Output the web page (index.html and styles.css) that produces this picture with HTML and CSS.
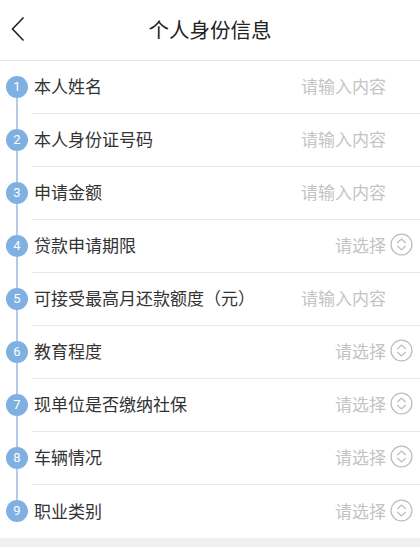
FILE: index.html
```html
<!DOCTYPE html>
<html>

<head>
  <meta charset="utf-8">
  <link rel="stylesheet" href="styles.css">
</head>

<body>

  <div class="topBar">
    <span class="backBtn">
      <svg width="14" height="26" viewBox="0 0 14 26">
        <path d="M12.5 1.5 L1.5 13 L12.5 24.5" fill="none" stroke="#222" stroke-width="1.6" />
      </svg>
    </span>
    <h1 class="pageTitle">个人身份信息</h1>
  </div>

  <div class="infoList">

    <div class="infoRow">
      <span class="stepNum">1</span>
      <div class="rowBody">
        <span class="rowLabel">本人姓名</span>
        <span class="rowInput">请输入内容</span>
      </div>
    </div>

    <div class="infoRow">
      <span class="stepNum">2</span>
      <div class="rowBody">
        <span class="rowLabel">本人身份证号码</span>
        <span class="rowInput">请输入内容</span>
      </div>
    </div>

    <div class="infoRow">
      <span class="stepNum">3</span>
      <div class="rowBody">
        <span class="rowLabel">申请金额</span>
        <span class="rowInput">请输入内容</span>
      </div>
    </div>

    <div class="infoRow">
      <span class="stepNum">4</span>
      <div class="rowBody">
        <span class="rowLabel">贷款申请期限</span>
        <span class="rowSelect">请选择
          <svg class="selIcon" width="23" height="23" viewBox="0 0 22 22">
            <circle cx="11" cy="11" r="10" fill="none" stroke="#bdbdbd" stroke-width="1.2" />
            <path d="M7 9.5 L11 5.8 L15 9.5 M7 12.5 L11 16.2 L15 12.5" fill="none" stroke="#bdbdbd" stroke-width="1.2" />
          </svg>
        </span>
      </div>
    </div>

    <div class="infoRow">
      <span class="stepNum">5</span>
      <div class="rowBody">
        <span class="rowLabel">可接受最高月还款额度（元）</span>
        <span class="rowInput">请输入内容</span>
      </div>
    </div>

    <div class="infoRow">
      <span class="stepNum">6</span>
      <div class="rowBody">
        <span class="rowLabel">教育程度</span>
        <span class="rowSelect">请选择
          <svg class="selIcon" width="23" height="23" viewBox="0 0 22 22">
            <circle cx="11" cy="11" r="10" fill="none" stroke="#bdbdbd" stroke-width="1.2" />
            <path d="M7 9.5 L11 5.8 L15 9.5 M7 12.5 L11 16.2 L15 12.5" fill="none" stroke="#bdbdbd" stroke-width="1.2" />
          </svg>
        </span>
      </div>
    </div>

    <div class="infoRow">
      <span class="stepNum">7</span>
      <div class="rowBody">
        <span class="rowLabel">现单位是否缴纳社保</span>
        <span class="rowSelect">请选择
          <svg class="selIcon" width="23" height="23" viewBox="0 0 22 22">
            <circle cx="11" cy="11" r="10" fill="none" stroke="#bdbdbd" stroke-width="1.2" />
            <path d="M7 9.5 L11 5.8 L15 9.5 M7 12.5 L11 16.2 L15 12.5" fill="none" stroke="#bdbdbd" stroke-width="1.2" />
          </svg>
        </span>
      </div>
    </div>

    <div class="infoRow">
      <span class="stepNum">8</span>
      <div class="rowBody">
        <span class="rowLabel">车辆情况</span>
        <span class="rowSelect">请选择
          <svg class="selIcon" width="23" height="23" viewBox="0 0 22 22">
            <circle cx="11" cy="11" r="10" fill="none" stroke="#bdbdbd" stroke-width="1.2" />
            <path d="M7 9.5 L11 5.8 L15 9.5 M7 12.5 L11 16.2 L15 12.5" fill="none" stroke="#bdbdbd" stroke-width="1.2" />
          </svg>
        </span>
      </div>
    </div>

    <div class="infoRow">
      <span class="stepNum">9</span>
      <div class="rowBody lastRow">
        <span class="rowLabel">职业类别</span>
        <span class="rowSelect">请选择
          <svg class="selIcon" width="23" height="23" viewBox="0 0 22 22">
            <circle cx="11" cy="11" r="10" fill="none" stroke="#bdbdbd" stroke-width="1.2" />
            <path d="M7 9.5 L11 5.8 L15 9.5 M7 12.5 L11 16.2 L15 12.5" fill="none" stroke="#bdbdbd" stroke-width="1.2" />
          </svg>
        </span>
      </div>
    </div>

  </div>

</body>

</html>
```

FILE: styles.css
```css
body {
  margin: 0;
  background-color: #eef0f3;
  font-family: "Noto Sans CJK SC", "Noto Sans", sans-serif;
  color: #333;
}

.topBar {
  height: 58px;
  padding-bottom: 2px;
  background-color: #fff;
  border-bottom: 1px solid #e6e6e6;
  display: flex;
  align-items: center;
  justify-content: center;
  position: relative;
}

.backBtn {
  position: absolute;
  left: 11px;
  top: 16px;
  display: flex;
}

.pageTitle {
  margin: 0;
  font-size: 20.5px;
  font-weight: normal;
  color: #222;
}

.infoList {
  background-color: #fff;
  background-image: linear-gradient(#b3cce6, #b3cce6);
  background-repeat: no-repeat;
  background-position: 16px 26px;
  background-size: 2px calc(100% - 54px);
}

.infoRow {
  height: 53px;
  display: flex;
  align-items: stretch;
}

.stepNum {
  width: 22px;
  height: 22px;
  margin: 0 4px 2px 6px;
  align-self: center;
  border-radius: 50%;
  background-color: #7fb0e2;
  color: #fff;
  font-family: "Roboto", "Liberation Sans", sans-serif;
  font-size: 13px;
  display: flex;
  align-items: center;
  justify-content: center;
}

.rowBody {
  flex: 1;
  display: flex;
  align-items: center;
  justify-content: space-between;
  border-bottom: 1px solid #e8e8e8;
  padding: 0 0 3px 2px;
}

.rowBody.lastRow {
  border-bottom: none;
}

.rowLabel {
  font-size: 17px;
  color: #333;
}

.rowInput {
  font-size: 17px;
  color: #c4c4c4;
  padding-right: 34px;
}

.rowSelect {
  font-size: 17px;
  color: #c4c4c4;
  padding-right: 7px;
  display: flex;
  align-items: center;
  gap: 4px;
}
```
